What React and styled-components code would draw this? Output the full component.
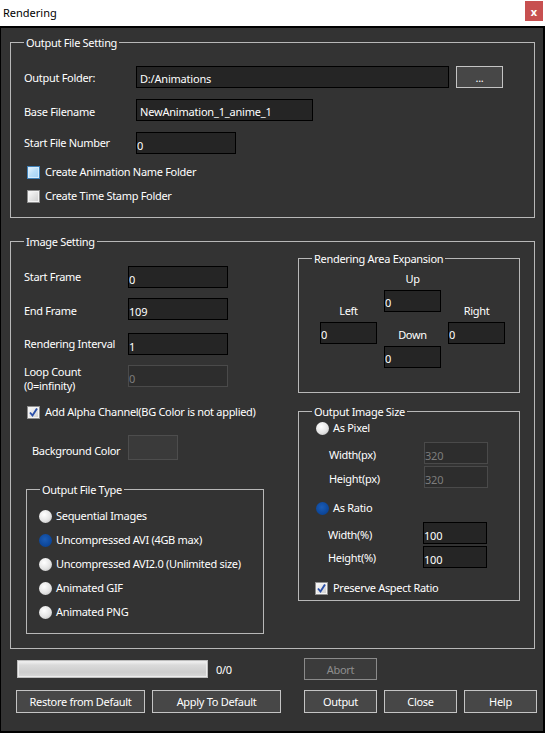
import React from "react";
import styled, { createGlobalStyle } from "styled-components";

const GlobalStyle = createGlobalStyle`
  html, body {
    margin: 0;
    padding: 0;
    background: #333333;
  }
`;

const Window = styled.div`
  width: 545px;
  height: 733px;
  display: flex;
  flex-direction: column;
  font-family: "Noto Sans", "DejaVu Sans", sans-serif;
  font-size: 11px;
  letter-spacing: -0.3px;
  color: #ffffff;
`;

const TitleBar = styled.div`
  height: 26px;
  flex: none;
  display: flex;
  justify-content: space-between;
  align-items: flex-start;
  background: #ffffff;
  color: #000000;
  padding: 0 2px 0 3px;
  box-sizing: border-box;
  h1 {
    margin: 0;
    font-size: 11px;
    font-weight: 400;
    letter-spacing: 0;
    line-height: 26px;
  }
`;

const CloseButton = styled.div`
  width: 18px;
  height: 20px;
  margin-top: 1px;
  background: #c75050;
  color: #ffffff;
  font-weight: 700;
  font-size: 11px;
  letter-spacing: 0;
  display: flex;
  align-items: center;
  justify-content: center;
`;

const Body = styled.div`
  flex: 1;
  background: #333333;
  border: solid #000000;
  border-width: 2px 2px 2px 1px;
  padding: 8px 8px 0 9px;
  display: flex;
  flex-direction: column;
`;

const Group = styled.fieldset`
  margin: 0;
  padding: 0;
  min-width: 0;
  box-sizing: border-box;
  border: 1px solid #b8b8b8;
  ${(p) => p.$w && `width: ${p.$w}px;`}
`;

const Legend = styled.legend`
  margin-left: 13px;
  padding: 0 2px;
  line-height: 13px;
  color: #ffffff;
`;

const Stack = styled.div`
  display: flex;
  flex-direction: column;
  padding: ${(p) => p.$pad || "0"};
`;

const Row = styled.div`
  display: flex;
  align-items: ${(p) => p.$align || "center"};
  margin-top: ${(p) => p.$mt || 0}px;
  margin-left: ${(p) => p.$ml || 0}px;
  height: ${(p) => (p.$h ? `${p.$h}px` : "auto")};
`;

const Label = styled.span`
  width: ${(p) => (p.$w ? `${p.$w}px` : "auto")};
  margin-left: ${(p) => p.$ml || 0}px;
  margin-top: ${(p) => p.$mt || 0}px;
  padding-top: ${(p) => (p.$dy || 0) * 2}px;
  flex: none;
  line-height: 14px;
  white-space: nowrap;
`;

const TextBox = styled.input`
  box-sizing: border-box;
  width: ${(p) => p.$w}px;
  height: 22px;
  flex: none;
  margin: 0;
  padding: ${(p) => p.$dy || 4}px 0 0 ${(p) => p.$pad || 0}px;
  background: ${(p) => (p.disabled ? "#2d2d2d" : "#252525")};
  border: 1px solid ${(p) => (p.disabled ? "#4a4a4a" : "#000000")};
  color: ${(p) => (p.disabled ? "#7d7d7d" : "#ffffff")};
  font: inherit;
  letter-spacing: -0.2px;
  outline: none;
`;

const ColorSwatch = styled.div`
  box-sizing: border-box;
  width: 50px;
  height: 25px;
  flex: none;
  background: #3a3a3a;
  border: 1px solid #4d4d4d;
`;

const Button = styled.div`
  box-sizing: border-box;
  width: ${(p) => p.$w}px;
  height: ${(p) => p.$h || 22}px;
  margin-left: ${(p) => p.$ml || 0}px;
  flex: none;
  display: flex;
  align-items: center;
  justify-content: center;
  background: ${(p) => (p.$disabled ? "#3b3b3b" : "#474747")};
  border: 1px solid ${(p) => (p.$disabled ? "#8a8a8a" : "#c4c4c4")};
  color: ${(p) => (p.$disabled ? "#8e8e8e" : "#ffffff")};
  white-space: nowrap;
`;

const Box = styled.span`
  box-sizing: border-box;
  width: 13px;
  height: 13px;
  flex: none;
  display: inline-flex;
  align-items: center;
  justify-content: center;
  border: 1px solid ${(p) => (p.$tone === "hover" ? "#3f81b8" : "#8e8e8e")};
  background: ${(p) =>
    p.$tone === "hover"
      ? "linear-gradient(135deg, #eaf6fe 0%, #b9def8 50%, #9fd0f4 100%)"
      : "linear-gradient(135deg, #fdfdfd 0%, #e2e2e2 55%, #cdcdcd 100%)"};
  box-shadow: inset 0 0 0 1px
    ${(p) => (p.$tone === "hover" ? "#d6ecfc" : "#f4f4f4")};
`;

const Radio = styled.span`
  width: 13px;
  height: 13px;
  flex: none;
  border-radius: 50%;
  background: ${(p) =>
    p.$on
      ? "radial-gradient(circle at 45% 40%, #1b5cb5 0%, #0c4699 65%, #083b82 100%)"
      : "radial-gradient(circle at 40% 35%, #ffffff 0%, #e4e4e4 55%, #b5b5b5 100%)"};
`;

const Columns = styled.div`
  display: flex;
  align-items: flex-start;
`;

const ExpandGrid = styled.div`
  display: flex;
  align-items: flex-start;
  gap: 7px;
  padding: 0 0 24px 21px;
`;

const ExpandCol = styled.div`
  width: 57px;
  display: flex;
  flex-direction: column;
  align-items: center;
  padding-top: ${(p) => p.$top}px;
  span {
    line-height: 14px;
    margin-bottom: 4px;
  }
`;

const Progress = styled.div`
  box-sizing: border-box;
  width: 191px;
  height: 18px;
  margin-left: 1px;
  border: 1px solid #bdbdbd;
  background: linear-gradient(#f4f4f4 0%, #dadada 25%, #cdcdcd 70%, #d8d8d8 100%);
  box-shadow: inset 0 0 0 1px #ececec;
`;

const Footer = styled.div`
  margin: 9px 0 0 6px;
  display: grid;
  grid-template-columns: 265px 233px;
  column-gap: 23px;
  row-gap: 10px;
`;

const Cell = styled.div`
  display: flex;
  align-items: center;
  gap: 7px;
`;

const Check = ({ tone, checked, children, ml = 3 }) => (
  <Row $h={16} $ml={ml}>
    <Box $tone={tone}>
      {checked && (
        <svg width="11" height="11" viewBox="0 0 11 11">
          <polyline points="2,5.5 4.5,8.5 9,1.5" fill="none" stroke="#2a4fa8" strokeWidth="1.9" />
        </svg>
      )}
    </Box>
    <Label $ml={5}>{children}</Label>
  </Row>
);

const RadioRow = ({ on, children, h = 24, mt = 0 }) => (
  <Row $h={h} $mt={mt}>
    <Radio $on={on} />
    <Label $ml={4}>{children}</Label>
  </Row>
);

const App = () => {
  return (
    <Window>
      <GlobalStyle />
      <TitleBar>
        <h1>Rendering</h1>
        <CloseButton>x</CloseButton>
      </TitleBar>
      <Body>
        <Group>
          <Legend>Output File Setting</Legend>
          <Stack $pad="17px 0 9px 13px">
            <Row>
              <Label $w={112} $dy={1}>Output Folder:</Label>
              <TextBox $w={313} $pad={3} $dy={2} value="D:/Animations" readOnly />
              <Button $w={47} $ml={7}>...</Button>
            </Row>
            <Row $mt={11}>
              <Label $w={112} $dy={2}>Base Filename</Label>
              <TextBox $w={177} $pad={3} $dy={2} value="NewAnimation_1_anime_1" readOnly />
            </Row>
            <Row $mt={11}>
              <Label $w={112}>Start File Number</Label>
              <TextBox $w={100} value="0" readOnly />
            </Row>
            <Row $mt={6} $h={24}>
              <Check tone="hover">Create Animation Name Folder</Check>
            </Row>
            <Row $h={24}>
              <Check>Create Time Stamp Folder</Check>
            </Row>
          </Stack>
        </Group>

        <Group style={{ marginTop: 17 }}>
          <Legend>Image Setting</Legend>
          <Columns>
            <Stack $pad="18px 0 14px 13px" style={{ flex: 1 }}>
              <Row>
                <Label $w={104}>Start Frame</Label>
                <TextBox $w={100} value="0" readOnly />
              </Row>
              <Row $mt={10}>
                <Label $w={104} $dy={2}>End Frame</Label>
                <TextBox $w={100} value="109" readOnly />
              </Row>
              <Row $mt={13}>
                <Label $w={104}>Rendering Interval</Label>
                <TextBox $w={100} value="1" readOnly />
              </Row>
              <Row $mt={10} $align="flex-start">
                <Label $w={104}>
                  Loop Count
                  <br />
                  (0=infinity)
                </Label>
                <TextBox $w={100} value="0" disabled />
              </Row>
              <Row $mt={11}>
                <Check checked>Add Alpha Channel(BG Color is not applied)</Check>
              </Row>
              <Row $mt={15} $align="flex-start">
                <Label $w={96} $ml={8} $mt={9}>Background Color</Label>
                <ColorSwatch />
              </Row>
              <Group $w={238} style={{ marginTop: 23, marginLeft: 2 }}>
                <Legend>Output File Type</Legend>
                <Stack $pad="8px 0 9px 12px">
                  <RadioRow>Sequential Images</RadioRow>
                  <RadioRow on>Uncompressed AVI (4GB max)</RadioRow>
                  <RadioRow>Uncompressed AVI2.0 (Unlimited size)</RadioRow>
                  <RadioRow>Animated GIF</RadioRow>
                  <RadioRow>Animated PNG</RadioRow>
                </Stack>
              </Group>
            </Stack>

            <Stack style={{ width: 222, marginRight: 14 }}>
              <Group style={{ marginTop: 4 }}>
                <Legend>Rendering Area Expansion</Legend>
                <ExpandGrid>
                  <ExpandCol $top={39}>
                    <span>Left</span>
                    <TextBox $w={57} $dy={3} value="0" readOnly />
                  </ExpandCol>
                  <ExpandCol $top={7}>
                    <span>Up</span>
                    <TextBox $w={57} $dy={3} value="0" readOnly />
                    <span style={{ marginTop: 16 }}>Down</span>
                    <TextBox $w={57} $dy={3} value="0" readOnly />
                  </ExpandCol>
                  <ExpandCol $top={39}>
                    <span>Right</span>
                    <TextBox $w={57} $dy={3} value="0" readOnly />
                  </ExpandCol>
                </ExpandGrid>
              </Group>

              <Group style={{ marginTop: 12 }}>
                <Legend>Output Image Size</Legend>
                <Stack $pad="0 0 4px 17px">
                  <RadioRow h={16} mt={2}>As Pixel</RadioRow>
                  <Row $mt={6}>
                    <Label $w={95} $ml={13} $dy={2}>Width(px)</Label>
                    <TextBox $w={64} value="320" disabled />
                  </Row>
                  <Row $mt={2}>
                    <Label $w={95} $ml={13} $dy={2}>Height(px)</Label>
                    <TextBox $w={64} value="320" disabled />
                  </Row>
                  <RadioRow on h={16} mt={12}>As Ratio</RadioRow>
                  <Row $mt={6}>
                    <Label $w={95} $ml={12} $dy={2}>Width(%)</Label>
                    <TextBox $w={64} value="100" readOnly />
                  </Row>
                  <Row $mt={2}>
                    <Label $w={95} $ml={12} $dy={1}>Height(%)</Label>
                    <TextBox $w={64} value="100" readOnly />
                  </Row>
                  <Row $mt={12}>
                    <Check checked ml={-1}>Preserve Aspect Ratio</Check>
                  </Row>
                </Stack>
              </Group>
            </Stack>
          </Columns>
        </Group>

        <Footer>
          <Cell>
            <Progress />
            <span style={{ marginLeft: 1 }}>0/0</span>
          </Cell>
          <Cell>
            <Button $w={73} $disabled>Abort</Button>
          </Cell>
          <Cell>
            <Button $w={129} $h={23}>Restore from Default</Button>
            <Button $w={129} $h={23}>Apply To Default</Button>
          </Cell>
          <Cell>
            <Button $w={73} $h={23}>Output</Button>
            <Button $w={73} $h={23}>Close</Button>
            <Button $w={73} $h={23}>Help</Button>
          </Cell>
        </Footer>
      </Body>
    </Window>
  );
};

export default App;
